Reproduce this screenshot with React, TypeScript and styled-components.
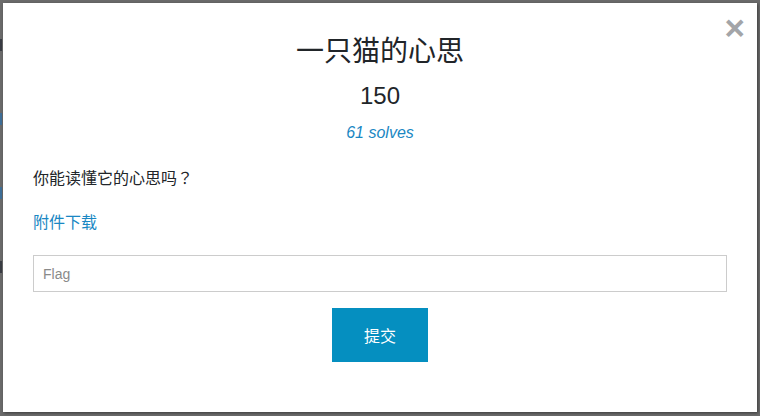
import React from 'react';
import styled, { createGlobalStyle } from 'styled-components';

const GlobalStyle = createGlobalStyle`
  html, body {
    margin: 0;
    padding: 0;
    background: #6b6b6b;
  }
  body {
    font-family: "Liberation Sans", Arial, "Noto Sans CJK SC", sans-serif;
    color: #212529;
  }
`;

const Backdrop = styled.div`
  display: flex;
  align-items: flex-start;
  width: 760px;
  height: 416px;
  box-sizing: border-box;
  padding: 3px 3px 4px 0;
  background: #6b6b6b;
  overflow: hidden;
`;

// slivers of the page behind the overlay, visible at the left edge
const PageEdge = styled.div`
  width: 3px;
  flex: none;
  display: flex;
  flex-direction: column;
  align-items: flex-start;
  padding-top: 36px;
  gap: 62px;
`;

const EdgeMark = styled.div<{ $tone: string }>`
  width: 2px;
  height: 12px;
  background: ${(p) => p.$tone};
`;

const Modal = styled.div`
  position: relative;
  flex: 1;
  height: 409px;
  background: #fff;
  box-shadow: 1px 1px 3px rgba(0, 0, 0, 0.45);
  box-sizing: border-box;
  padding: 32px 30px 0;
  display: flex;
  flex-direction: column;
`;

const Close = styled.button`
  position: absolute;
  top: 7px;
  right: 12px;
  border: none;
  background: none;
  padding: 0;
  font-family: "Liberation Sans", Arial, sans-serif;
  font-size: 35px;
  font-weight: bold;
  line-height: 36px;
  color: #a3a5a8;
  cursor: pointer;
`;

const Title = styled.h3`
  margin: 0;
  text-align: center;
  font-size: 28px;
  font-weight: 400;
  line-height: 1.2;
  font-family: "Liberation Sans", Arial, "Noto Sans CJK SC", sans-serif;
`;

const Points = styled.h4`
  margin: 13px 0 0;
  text-align: center;
  font-size: 24px;
  font-weight: 400;
  line-height: 1.2;
`;

const Solves = styled.a`
  display: block;
  margin-top: 11px;
  text-align: center;
  font-size: 16px;
  line-height: 24px;
  font-style: italic;
  color: #1a87c3;
  text-decoration: none;
`;

const Description = styled.p`
  margin: 22px 0 0;
  height: 24px;
  font-size: 16px;
  line-height: 24px;
  color: #212529;
`;

const FullWidthMark = styled.span`
  font-family: "Noto Sans CJK TC", sans-serif;
  line-height: 1;
`;

const FileLink = styled.a`
  display: block;
  margin-top: 20px;
  font-size: 16px;
  line-height: 24px;
  color: #1a87c3;
  text-decoration: none;
`;

const FlagInput = styled.input`
  margin-top: 20px;
  height: 37px;
  box-sizing: border-box;
  border: 1px solid #cccccc;
  border-radius: 0;
  padding: 0 9px;
  font-family: "Liberation Sans", Arial, sans-serif;
  font-size: 14px;
  color: #555;
  outline: none;
  &::placeholder {
    color: #8a8a8a;
  }
`;

const SubmitRow = styled.div`
  display: flex;
  justify-content: center;
  margin-top: 16px;
`;

const SubmitButton = styled.button`
  width: 96px;
  height: 54px;
  border: none;
  border-radius: 0;
  background: #058fc0;
  color: #fff;
  font-family: "Liberation Sans", Arial, "Noto Sans CJK SC", sans-serif;
  font-size: 16px;
  cursor: pointer;
`;

function App() {
  return (
    <>
      <GlobalStyle />
      <Backdrop>
        <PageEdge>
          <EdgeMark $tone="#3a3d44" />
          <EdgeMark $tone="#3f6f98" />
          <EdgeMark $tone="#3f6f98" />
          <EdgeMark $tone="#3a3d44" />
        </PageEdge>
        <Modal>
          <Close aria-label="Close">×</Close>
          <Title>一只猫的心思</Title>
          <Points>150</Points>
          <Solves href="#">61 solves</Solves>
          <Description>
            你能读懂它的心思吗<FullWidthMark>？</FullWidthMark>
          </Description>
          <FileLink href="#">附件下载</FileLink>
          <FlagInput placeholder="Flag" />
          <SubmitRow>
            <SubmitButton>提交</SubmitButton>
          </SubmitRow>
        </Modal>
      </Backdrop>
    </>
  );
}

export default App;
